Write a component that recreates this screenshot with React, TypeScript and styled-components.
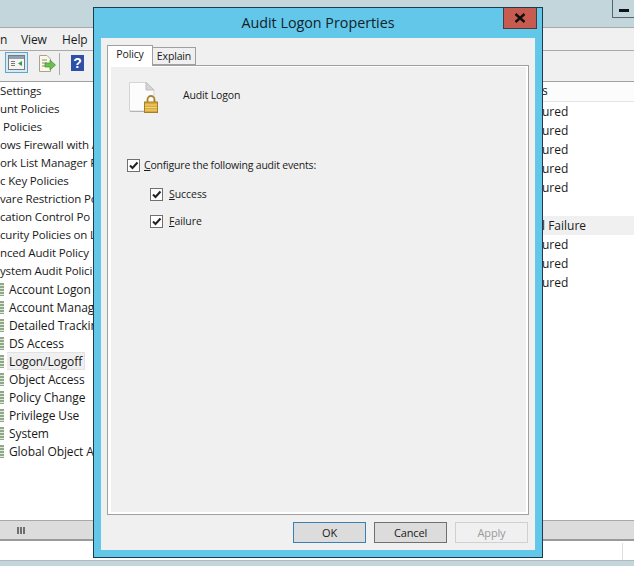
import React from "react";
import styled, { createGlobalStyle } from "styled-components";

const GlobalStyle = createGlobalStyle`
  html, body {
    margin: 0;
    padding: 0;
    background: #c3d6dc;
  }
  body {
    font-family: "Open Sans", "Liberation Sans", sans-serif;
    font-size: 12px;
    color: #1a1a1a;
  }
`;

const treeRows = [
  { label: "Settings", indent: 0 },
  { label: "unt Policies", indent: 0 },
  { label: "Policies", indent: 3 },
  { label: "ows Firewall with A", indent: 0 },
  { label: "ork List Manager P", indent: 0 },
  { label: "c Key Policies", indent: 0 },
  { label: "vare Restriction Po", indent: 0 },
  { label: "cation Control Po", indent: 0 },
  { label: "curity Policies on L", indent: 0 },
  { label: "nced Audit Policy", indent: 0 },
  { label: "ystem Audit Polici", indent: 0 },
];

const auditRows = [
  "Account Logon",
  "Account Manag",
  "Detailed Trackin",
  "DS Access",
  "Logon/Logoff",
  "Object Access",
  "Policy Change",
  "Privilege Use",
  "System",
  "Global Object A",
];

const listRows = ["ured", "ured", "ured", "ured", "ured", "", "Failure", "ured", "ured", "ured"];

function Check() {
  return (
    <CheckBox>
      <svg width="11" height="11" viewBox="0 0 11 11">
        <path d="M2 5.5 L4.5 8 L9.5 2.5" fill="none" stroke="#222" strokeWidth="2" />
      </svg>
    </CheckBox>
  );
}

function PolicyIcon() {
  return (
    <svg width="30" height="32" viewBox="0 0 30 32">
      <path d="M1.5 1.5 H18 L26 9 V30 H1.5 Z" fill="#fcfcfc" stroke="#d4d4d4" />
      <path d="M2 30.5 H26" stroke="#b5b5b5" />
      <path d="M18 1.5 V9 H26 Z" fill="#d6d6d6" stroke="#bdbdbd" />
      <path d="M19.5 21 V18.5 a3.5 3.5 0 0 1 7 0 V21" fill="none" stroke="#a8842c" strokeWidth="1.8" />
      <rect x="16.5" y="21" width="13" height="10.5" fill="#d8a93a" stroke="#a57f25" />
      <path d="M17 24 H29 M17 26.5 H29 M17 29 H29" stroke="#f3d77e" />
    </svg>
  );
}

export default function App() {
  return (
    <>
      <GlobalStyle />
      <Page>
        <TopBand>
          <MinimizeButton>
            <span />
          </MinimizeButton>
        </TopBand>
        <MenuBar>
          <MenuItem $width={21}>n</MenuItem>
          <MenuItem $width={41}>View</MenuItem>
          <MenuItem $width={30}>Help</MenuItem>
        </MenuBar>
        <Toolbar>
          <ActiveTool>
            <svg width="17" height="15" viewBox="0 0 17 15">
              <rect x="0.5" y="0.5" width="16" height="14" fill="#f4f4f4" stroke="#7a7a7a" />
              <rect x="1" y="1" width="15" height="3" fill="#8f9fb0" />
              <rect x="3" y="6" width="4" height="1" fill="#7a7a7a" />
              <rect x="3" y="8" width="4" height="1" fill="#7a7a7a" />
              <rect x="3" y="10" width="4" height="1" fill="#7a7a7a" />
              <path d="M14 6 L10 8.5 L14 11 Z" fill="#3d9a45" />
            </svg>
          </ActiveTool>
          <Tool>
            <svg width="18" height="17" viewBox="0 0 18 17">
              <path d="M1.5 0.5 H9 L12.5 4 V16.5 H1.5 Z" fill="#fbf8ea" stroke="#a8a48a" />
              <path d="M4 5 H9 M4 8 H9 M4 11 H8" stroke="#8a8a7a" />
              <path d="M7 8 H12 V5 L17.5 10 L12 15 V12 H7 Z" fill="#6cc04a" stroke="#3f8f35" strokeWidth="0.7" />
            </svg>
          </Tool>
          <ToolSeparator />
          <HelpIcon>?</HelpIcon>
        </Toolbar>
        <Body>
          <Tree>
            {treeRows.map((r) => (
              <TreeRow key={r.label} $indent={r.indent}>
                {r.label}
              </TreeRow>
            ))}
            {auditRows.map((label) => (
              <AuditRow key={label}>
                <LeafIcon />
                <AuditLabel $selected={label === "Logon/Logoff"}>{label}</AuditLabel>
              </AuditRow>
            ))}
          </Tree>
          <List>
            <ListHeader>s</ListHeader>
            {listRows.map((label, i) => (
              <ListRow key={i} $marked={label === "Failure"}>
                {label === "Failure" ? "l Failure" : label}
              </ListRow>
            ))}
          </List>
        </Body>
        <ScrollBar>
          <Grip />
        </ScrollBar>
        <StatusArea>
          <StatusPane />
        </StatusArea>
        <BottomBand />

        <Dialog>
          <TitleBar>
            <Title>Audit Logon Properties</Title>
            <CloseButton>
              <svg width="12" height="10" viewBox="0 0 12 10">
                <path d="M1.5 1 L10.5 9 M10.5 1 L1.5 9" stroke="#111" strokeWidth="2.4" />
              </svg>
            </CloseButton>
          </TitleBar>
          <DialogBody>
            <TabStrip>
              <Tab $active>Policy</Tab>
              <Tab>Explain</Tab>
            </TabStrip>
            <TabPage>
              <TabInner>
                <Heading>
                  <PolicyIcon />
                  <HeadingText>Audit Logon</HeadingText>
                </Heading>
                <CheckRow>
                  <Check />
                  <span>
                    <u>C</u>onfigure the following audit events:
                  </span>
                </CheckRow>
                <SubRow>
                  <Check />
                  <span>
                    <u>S</u>uccess
                  </span>
                </SubRow>
                <SubRow $last>
                  <Check />
                  <span>
                    <u>F</u>ailure
                  </span>
                </SubRow>
              </TabInner>
            </TabPage>
            <Footer>
              <DialogButton $variant="default">OK</DialogButton>
              <DialogButton>Cancel</DialogButton>
              <DialogButton $variant="disabled">Apply</DialogButton>
            </Footer>
          </DialogBody>
        </Dialog>
      </Page>
    </>
  );
}

const Page = styled.div`
  position: relative;
  width: 634px;
  height: 566px;
  overflow: hidden;
  display: flex;
  flex-direction: column;
`;

const TopBand = styled.div`
  height: 27px;
  background: #c3d6dc;
  border-bottom: 1px solid #a3a9ac;
  display: flex;
  justify-content: flex-end;
  align-items: flex-start;
`;

const MinimizeButton = styled.div`
  width: 22px;
  height: 18px;
  box-sizing: border-box;
  border-left: 1px solid #5a6468;
  border-bottom: 1px solid #5a6468;
  display: flex;
  justify-content: center;
  align-items: center;
  padding-top: 3px;

  span {
    width: 10px;
    height: 3px;
    background: #111;
  }
`;

const MenuBar = styled.div`
  height: 22px;
  background: #f0f0f0;
  border-bottom: 1px solid #a9a9a9;
  display: flex;
  align-items: center;
  font-size: 12px;
  letter-spacing: -0.1px;
`;

const MenuItem = styled.div<{ $width: number }>`
  width: ${(p) => p.$width}px;
`;

const Toolbar = styled.div`
  height: 29px;
  background: #f0f0f0;
  border-bottom: 1px solid #a0a0a0;
  display: flex;
  align-items: flex-start;
  padding: 1px 0 0 5px;
  box-sizing: content-box;
`;

const ActiveTool = styled.div`
  width: 23px;
  height: 21px;
  box-sizing: border-box;
  border: 1px solid #5da6d0;
  background: #d8e9f3;
  display: flex;
  align-items: center;
  justify-content: center;
`;

const Tool = styled.div`
  margin: 3px 0 0 10px;
`;

const ToolSeparator = styled.div`
  width: 1px;
  height: 22px;
  margin: 1px 0 0 3px;
  background: #a8a8a8;
`;

const HelpIcon = styled.div`
  width: 13px;
  height: 16px;
  margin: 3px 0 0 11px;
  background: #2d4fa8;
  color: #fff;
  font-family: "Liberation Sans", sans-serif;
  font-weight: bold;
  font-size: 14px;
  line-height: 16px;
  text-align: center;
`;

const Body = styled.div`
  flex: none;
  height: 438px;
  background: #fff;
  display: flex;
  justify-content: space-between;
`;

const Tree = styled.div`
  width: 93px;
  overflow: hidden;
`;

const TreeRow = styled.div<{ $indent: number }>`
  height: 18px;
  line-height: 18px;
  white-space: nowrap;
  font-size: 11.5px;
  letter-spacing: -0.15px;
  padding-left: ${(p) => p.$indent}px;
`;

const AuditRow = styled.div`
  height: 18px;
  display: flex;
  align-items: center;
  white-space: nowrap;
  letter-spacing: -0.1px;
`;

const LeafIcon = styled.div`
  width: 4px;
  height: 13px;
  flex: none;
  margin-right: 3px;
  background: repeating-linear-gradient(#8fa888 0 2px, #dfe8da 2px 3px);
`;

const AuditLabel = styled.div<{ $selected?: boolean }>`
  height: 18px;
  line-height: 17px;
  padding: 0 2px;
  box-sizing: border-box;
  background: ${(p) => (p.$selected ? "#f0f0f0" : "transparent")};
  border: 1px solid ${(p) => (p.$selected ? "#e2e2e2" : "transparent")};
  border-left: 0;
`;

const List = styled.div`
  width: 92px;
`;

const ListHeader = styled.div`
  height: 19px;
  line-height: 18px;
  border-bottom: 1px solid #e5e5e5;
  background: #fcfcfc;
`;

const ListRow = styled.div<{ $marked: boolean }>`
  height: 19px;
  line-height: 19px;
  background: ${(p) => (p.$marked ? "#f0f0f0" : "transparent")};
`;

const ScrollBar = styled.div`
  height: 18px;
  background: #dcdcdc;
  border-top: 1px solid #a8a8a8;
  border-bottom: 2px solid #9a9a9a;
  box-sizing: content-box;
  display: flex;
  align-items: center;
  padding-left: 17px;
`;

const Grip = styled.div`
  width: 8px;
  height: 7px;
  background: repeating-linear-gradient(90deg, #6e6e6e 0 2px, transparent 2px 3px);
`;

const StatusArea = styled.div`
  flex: 1;
  background: #fff;
  border-bottom: 1px solid #b3b8ba;
  display: flex;
  justify-content: flex-end;
  padding-top: 2px;
`;

const StatusPane = styled.div`
  width: 11px;
  border-left: 1px solid #dedede;
`;

const BottomBand = styled.div`
  height: 5px;
  background: #c3d6dc;
`;

const Dialog = styled.div`
  position: absolute;
  left: 93px;
  top: 7px;
  width: 450px;
  height: 551px;
  box-sizing: border-box;
  background: #63c7e9;
  border: 1px solid #1d3c4c;
  padding: 0 7px 7px;
  display: flex;
  flex-direction: column;
  font-size: 10.5px;
  letter-spacing: -0.15px;
`;

const TitleBar = styled.div`
  position: relative;
  height: 30px;
  flex: none;
  display: flex;
  align-items: center;
  justify-content: center;
`;

const Title = styled.div`
  font-size: 14.3px;
  letter-spacing: 0;
  color: #10222c;
  margin-top: -1px;
`;

const CloseButton = styled.div`
  position: absolute;
  right: -2px;
  top: 0;
  width: 34px;
  height: 21px;
  box-sizing: border-box;
  background: #c75b50;
  border: 1px solid #4a3a3a;
  border-top: 0;
  display: flex;
  align-items: center;
  justify-content: center;
`;

const DialogBody = styled.div`
  flex: 1;
  background: #f0f0f0;
  padding: 7px 6px 0;
  display: flex;
  flex-direction: column;
`;

const TabStrip = styled.div`
  height: 20px;
  display: flex;
  align-items: flex-end;
  position: relative;
  z-index: 1;
`;

const Tab = styled.div<{ $active?: boolean }>`
  box-sizing: border-box;
  height: ${(p) => (p.$active ? 21 : 18)}px;
  width: ${(p) => (p.$active ? 46 : 44)}px;
  margin-bottom: ${(p) => (p.$active ? -1 : 0)}px;
  margin-left: ${(p) => (p.$active ? 0 : -1)}px;
  background: ${(p) => (p.$active ? "#fff" : "#f0f0f0")};
  border: 1px solid #a0a0a0;
  border-bottom: ${(p) => (p.$active ? "0" : "1px solid #a0a0a0")};
  text-align: center;
  line-height: 17px;
`;

const TabPage = styled.div`
  width: 422px;
  height: 450px;
  box-sizing: border-box;
  border: 1px solid #a0a0a0;
  background: #fff;
  padding: 1px 2px 2px 3px;
`;

const TabInner = styled.div`
  height: 100%;
  background: #f0f0f0;
`;

const Heading = styled.div`
  display: flex;
  align-items: center;
  height: 32px;
  padding: 14px 0 0 17px;
`;

const HeadingText = styled.div`
  margin: -4px 0 0 25px;
`;

const CheckRow = styled.div`
  display: flex;
  align-items: center;
  gap: 4px;
  margin: 45px 0 0 16px;
  letter-spacing: -0.2px;
`;

const SubRow = styled(CheckRow)<{ $last?: boolean }>`
  margin: ${(p) => (p.$last ? 13 : 15)}px 0 0 39px;
  gap: 6px;
  letter-spacing: -0.05px;
`;

const CheckBox = styled.div`
  width: 13px;
  height: 13px;
  box-sizing: border-box;
  border: 1px solid #707070;
  background: #fff;
  display: flex;
  align-items: center;
  justify-content: center;
`;

const Footer = styled.div`
  display: flex;
  gap: 8px;
  justify-content: flex-end;
  margin: 7px 1px 0 0;
`;

const DialogButton = styled.div<{ $variant?: "default" | "disabled" }>`
  width: 73px;
  height: 21px;
  box-sizing: border-box;
  line-height: 19px;
  text-align: center;
  font-size: 11px;
  border: 1px solid
    ${(p) => (p.$variant === "default" ? "#3c7fb1" : p.$variant === "disabled" ? "#d0d0d0" : "#707070")};
  background: ${(p) => (p.$variant === "disabled" ? "#f0f0f0" : "#dcdcdc")};
  color: ${(p) => (p.$variant === "disabled" ? "#9a9a9a" : "#1a1a1a")};
`;
